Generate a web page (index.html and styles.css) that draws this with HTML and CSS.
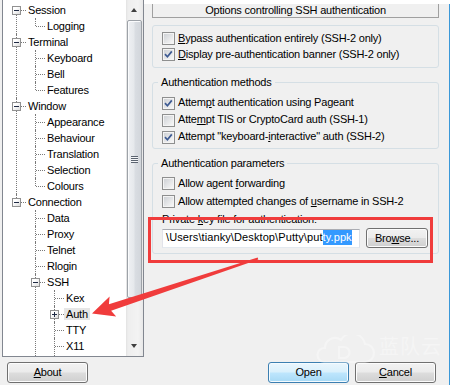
FILE: index.html
```html
<!DOCTYPE html>
<html>
<head>
<meta charset="utf-8">
<link rel="stylesheet" href="styles.css">
</head>
<body>
<div class="window">
  <div class="treebox">
    <div class="treeview">
      <ul class="tree">
        <li class="first"><div class="row"><span class="exp"></span><span class="lbl">Session</span></div>
          <ul>
            <li class="last"><div class="row"><span class="lbl">Logging</span></div></li>
          </ul>
        </li>
        <li><div class="row"><span class="exp"></span><span class="lbl">Terminal</span></div>
          <ul>
            <li><div class="row"><span class="lbl">Keyboard</span></div></li>
            <li><div class="row"><span class="lbl">Bell</span></div></li>
            <li class="last"><div class="row"><span class="lbl">Features</span></div></li>
          </ul>
        </li>
        <li><div class="row"><span class="exp"></span><span class="lbl">Window</span></div>
          <ul>
            <li><div class="row"><span class="lbl">Appearance</span></div></li>
            <li><div class="row"><span class="lbl">Behaviour</span></div></li>
            <li><div class="row"><span class="lbl">Translation</span></div></li>
            <li><div class="row"><span class="lbl">Selection</span></div></li>
            <li class="last"><div class="row"><span class="lbl">Colours</span></div></li>
          </ul>
        </li>
        <li class="last"><div class="row"><span class="exp"></span><span class="lbl">Connection</span></div>
          <ul>
            <li><div class="row"><span class="lbl">Data</span></div></li>
            <li><div class="row"><span class="lbl">Proxy</span></div></li>
            <li><div class="row"><span class="lbl">Telnet</span></div></li>
            <li><div class="row"><span class="lbl">Rlogin</span></div></li>
            <li class="more"><div class="row"><span class="exp"></span><span class="lbl">SSH</span></div>
              <ul>
                <li><div class="row"><span class="lbl">Kex</span></div></li>
                <li><div class="row"><span class="exp plus"></span><span class="lbl sel">Auth</span></div></li>
                <li><div class="row"><span class="lbl">TTY</span></div></li>
                <li class="more"><div class="row"><span class="lbl">X11</span></div></li>
              </ul>
            </li>
          </ul>
        </li>
      </ul>
    </div>
    <div class="vscroll">
      <div class="sbtn up"></div>
      <div class="thumb"><span class="grip"></span></div>
      <div class="track"></div>
      <div class="sbtn down"></div>
    </div>
  </div>

  <div class="panel">
    <div class="strip"></div>
    <div class="hdr">Options controlling SSH authentication</div>

    <div class="grp g1">
      <div class="cbrow"><span class="cb"></span><span><u>B</u>ypass authentication entirely (SSH-2 only)</span></div>
      <div class="cbrow"><span class="cb on"><svg width="13" height="13" viewBox="0 0 13 13"><path d="M3 6.2 L5.4 8.8 L9.8 3.4" fill="none" stroke="#3d5a92" stroke-width="1.7"/></svg></span><span><u>D</u>isplay pre-authentication banner (SSH-2 only)</span></div>
    </div>

    <fieldset class="grp g2">
      <legend>Authentication methods</legend>
      <div class="cbrow"><span class="cb on"><svg width="13" height="13" viewBox="0 0 13 13"><path d="M3 6.2 L5.4 8.8 L9.8 3.4" fill="none" stroke="#3d5a92" stroke-width="1.7"/></svg></span><span>Attem<u>p</u>t authentication using Pageant</span></div>
      <div class="cbrow"><span class="cb"></span><span>Atte<u>m</u>pt TIS or CryptoCard auth (SSH-1)</span></div>
      <div class="cbrow"><span class="cb on"><svg width="13" height="13" viewBox="0 0 13 13"><path d="M3 6.2 L5.4 8.8 L9.8 3.4" fill="none" stroke="#3d5a92" stroke-width="1.7"/></svg></span><span>Attempt "keyboard-<u>i</u>nteractive" auth (SSH-2)</span></div>
    </fieldset>

    <fieldset class="grp g3">
      <legend>Authentication parameters</legend>
      <div class="cbrow"><span class="cb"></span><span>Allow agent <u>f</u>orwarding</span></div>
      <div class="cbrow"><span class="cb"></span><span>Allow attempted changes of <u>u</u>sername in SSH-2</span></div>
      <div class="keylbl">Private <u>k</u>ey file for authentication:</div>
      <div class="keyrow">
        <div class="field"><span class="ftxt">\Users\tianky\Desktop\Putty\put</span><span class="ftxt fsel">ty.ppk</span></div>
        <button class="btn browse">Bro<u>w</u>se...</button>
      </div>
    </fieldset>
  </div>

  <div class="leftbtns"><button class="btn"><u>A</u>bout</button></div>
  <div class="rightbtns">
    <button class="btn default">Open</button>
    <button class="btn"><u>C</u>ancel</button>
  </div>
</div>

<div class="wm" aria-hidden="true">
  <svg width="66" height="30" viewBox="0 0 66 30"><path d="M12 27 H53 A9 9 0 0 0 53 9 A13 13 0 0 0 29 5 A10 10 0 0 0 13 13 A7 7 0 0 0 12 27 Z M27 12 V23 H32 A5.5 5.5 0 0 0 32 12 Z" fill="none" stroke="#fff" stroke-width="2.2"/></svg>
  <div class="wmtext"><span class="wmcn">蓝队云</span></div>
</div>

<div class="redbox"></div>
<svg class="arrow" width="451" height="385" viewBox="0 0 451 385">
  <polygon points="257.7,257.6 108.9,304.2 109.6,296.6 92,313.5 116.2,316.6 111.1,310.8 258.3,259.4" fill="#f03c3c"/>
</svg>
</body>
</html>
```

FILE: styles.css
```css
* { box-sizing: border-box; }
html, body { margin: 0; padding: 0; }
body {
  width: 451px;
  height: 385px;
  overflow: hidden;
  background: #fff;
  font-family: "Liberation Sans", Arial, sans-serif;
  font-size: 11px;
  letter-spacing: -0.2px;
  color: #000;
  position: relative;
}

.window {
  width: 450px;
  height: 385px;
  background: #f0f0f0;
  border-right: 1px solid #3b98d8;
  display: grid;
  grid-template-columns: 152px 297px;
  grid-template-rows: 357px 21px;
  row-gap: 5px;
}

/* ---------- tree ---------- */
.treebox {
  margin-left: 2px;
  width: 142px;
  height: 357px;
  border: 1px solid #828790;
  border-top: 0;
  display: flex;
  background: #fff;
}
.treeview {
  width: 123px;
  height: 356px;
  overflow: hidden;
  padding-top: 2px;
}
.tree, .tree ul { list-style: none; margin: 0; padding: 0; }
.tree ul { padding-left: 19px; }
.tree li { position: relative; }
.tree li::before {
  content: "";
  position: absolute;
  left: 13px;
  top: 0;
  bottom: 0;
  border-left: 1px dotted #7a7a7a;
}
.tree li.last::before { bottom: auto; height: 8px; }
.tree > li.first::before { top: 8px; }
.tree li.more::before { bottom: -2px; }
.row {
  position: relative;
  height: 16px;
  display: flex;
  align-items: flex-start;
  padding-left: 23px;
}
.row::before {
  content: "";
  position: absolute;
  left: 14px;
  top: 8px;
  width: 9px;
  border-top: 1px dotted #7a7a7a;
}
.lbl {
  height: 12px;
  line-height: 12px;
  margin-top: 2px;
  padding: 0 2px;
  white-space: nowrap;
}
.lbl.sel { background: #e6e6e6; }
.exp {
  position: absolute;
  left: 9px;
  top: 4px;
  width: 9px;
  height: 9px;
  border: 1px solid #919191;
  background: linear-gradient(135deg, #ffffff 30%, #dcdcdc);
  z-index: 1;
}
.exp::after {
  content: "";
  position: absolute;
  left: 1px;
  top: 3px;
  width: 5px;
  height: 1px;
  background: #1f2a44;
}
.exp.plus::before {
  content: "";
  position: absolute;
  left: 3px;
  top: 1px;
  width: 1px;
  height: 5px;
  background: #1f2a44;
}

/* ---------- scrollbar ---------- */
.vscroll {
  width: 17px;
  height: 356px;
  display: flex;
  flex-direction: column;
  background: linear-gradient(to right, #e2e2e2, #eeeeee 2px, #f3f3f3 12px, #e8e8e8);
}
.sbtn { position: relative; flex: none; }
.sbtn.up { height: 19px; }
.sbtn.down { height: 18px; }
.sbtn::after {
  content: "";
  position: absolute;
  left: 5px;
  width: 0;
  height: 0;
  border-left: 3.5px solid transparent;
  border-right: 3.5px solid transparent;
}
.sbtn.up::after { top: 8px; border-bottom: 4px solid #404040; }
.sbtn.down::after { top: 6px; border-top: 4px solid #404040; }
.thumb {
  flex: none;
  height: 278px;
  margin: 1px 1px 0 1px;
  border: 1px solid #9da2a8;
  border-radius: 2px;
  background: linear-gradient(to right, #eef0f3, #e6e9ec 45%, #d9dde2 55%, #d2d6db);
  box-shadow: inset 1px 1px 0 #fafbfc;
  position: relative;
  display: flex;
  align-items: center;
  justify-content: center;
}
.grip {
  width: 7px;
  height: 7px;
  background: repeating-linear-gradient(to bottom, #5b6470 0 1px, #f4f6f8 1px 2px);
}
.track { flex: 1; }

/* ---------- right panel ---------- */
.panel {
  display: flex;
  flex-direction: column;
}
.strip {
  height: 4px;
  background: #fff;
  margin-left: -8px;
  margin-right: -1px;
  flex: none;
}
.hdr {
  width: 287px;
  height: 14px;
  border: 1px solid #a0a0a0;
  border-top: 0;
  text-align: center;
  line-height: 13px;
  white-space: nowrap;
}
.grp {
  width: 287px;
  margin: 0;
  min-width: 0;
  border: 1px solid #d5dfe5;
  border-radius: 3px;
  padding: 0 10px 0 9px;
}
.g1 {
  margin-top: 7px;
  padding-top: 4px;
  padding-bottom: 5px;
}
.g1 .cbrow { height: 16px; line-height: 16px; }
.g1 .cb { margin-top: 2px; }
.g2 {
  margin-top: 8px;
  padding-top: 5px;
  padding-bottom: 3px;
}
.g2 .cbrow { height: 17px; line-height: 17px; }
.g3 {
  margin-top: 8px;
  padding-top: 4px;
  padding-bottom: 5px;
}
.g3 .cbrow { height: 18px; line-height: 18px; }
legend {
  padding: 0 3px;
  margin-left: -4px;
  line-height: 13px;
  height: 13px;
  white-space: nowrap;
}
.cbrow {
  display: flex;
  align-items: flex-start;
  white-space: nowrap;
}
.cb {
  flex: none;
  width: 13px;
  height: 13px;
  margin-top: 3px;
  margin-right: 3px;
  border: 1px solid #8e8f8f;
  background: #f4f4f4;
  position: relative;
}
.cb::before {
  content: "";
  position: absolute;
  left: 1px;
  top: 1px;
  width: 9px;
  height: 9px;
  background: linear-gradient(135deg, #cfd2d6, #f7f7f7);
}
.cb svg { position: absolute; left: -1px; top: -1px; }
.keylbl {
  height: 17px;
  line-height: 18px;
  white-space: nowrap;
}
.keyrow {
  margin-top: 1px;
  display: flex;
  align-items: flex-end;
  gap: 6px;
}
.field {
  width: 198px;
  height: 19px;
  border: 1px solid;
  border-color: #abadb3 #dbdfe6 #e3e9ef #e2e3ea;
  background: #fff;
  padding-left: 3px;
  overflow: hidden;
  white-space: nowrap;
  display: flex;
  align-items: flex-start;
  letter-spacing: 0.1px;
}
.ftxt { line-height: 15px; height: 15px; }
.fsel { background: #3399ff; color: #fff; }

/* ---------- buttons ---------- */
.btn {
  width: 81px;
  height: 21px;
  padding: 0;
  margin: 0;
  font: inherit;
  letter-spacing: inherit;
  color: #000;
  line-height: 19px;
  text-align: center;
  border: 1px solid #707070;
  border-radius: 3px;
  background: linear-gradient(#f2f2f2 0%, #ebebeb 48%, #dddddd 52%, #cfcfcf 100%);
  box-shadow: inset 0 0 0 1px #fcfcfc;
}
.btn.default {
  border-color: #3c7fb1;
  background: linear-gradient(#eaf6fd 0%, #d9f0fc 48%, #bee6fd 52%, #a7d9f5 100%);
  box-shadow: inset 0 0 0 1px #f4fbff;
}
.btn.browse { width: 62px; height: 20px; line-height: 18px; }
.leftbtns { padding-left: 7px; }
.rightbtns {
  display: flex;
  gap: 6px;
  padding-left: 116px;
}

/* ---------- overlays ---------- */
.wm {
  position: absolute;
  left: 312px;
  top: 335px;
  display: flex;
  align-items: flex-start;
  gap: 1px;
  opacity: 0.35;
  pointer-events: none;
}
.wmtext { display: flex; flex-direction: column; }
.wmcn {
  font-family: "Noto Sans CJK SC", sans-serif;
  font-size: 20px;
  line-height: 22px;
  letter-spacing: 1px;
  color: #fff;
}
.redbox {
  position: absolute;
  left: 148px;
  top: 217px;
  width: 285px;
  height: 46px;
  border: 3px solid #f03c3c;
  pointer-events: none;
}
.arrow {
  position: absolute;
  left: 0;
  top: 0;
  pointer-events: none;
}
```
